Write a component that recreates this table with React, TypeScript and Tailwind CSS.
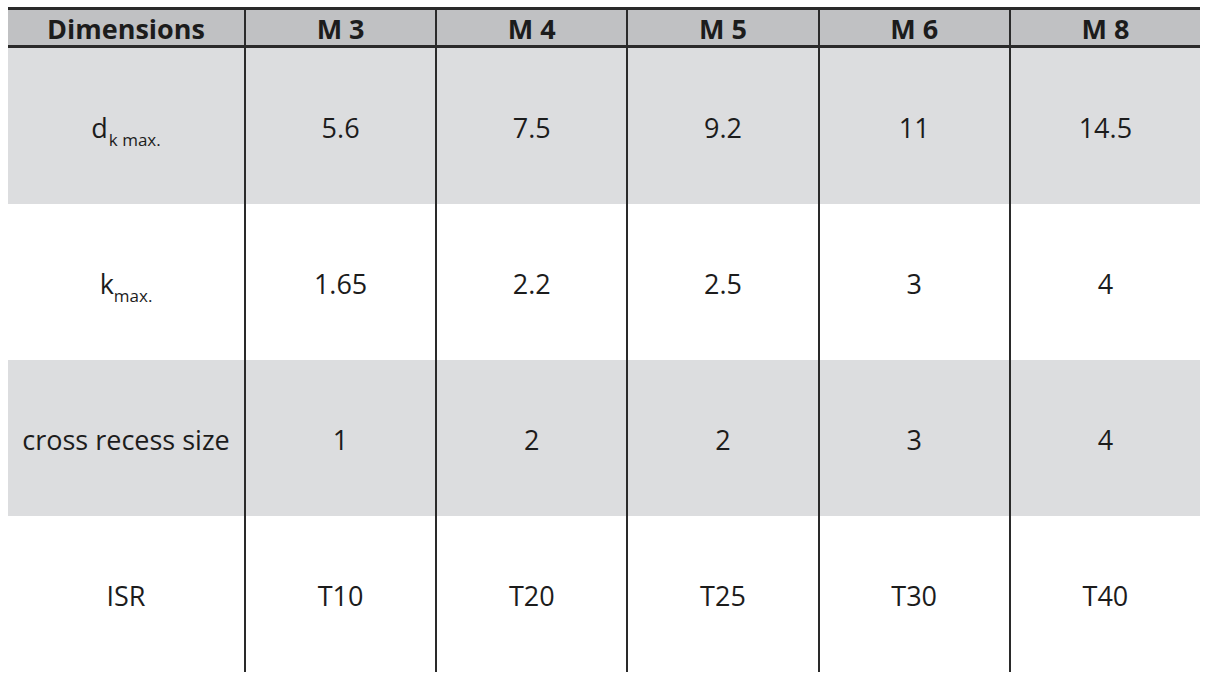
const cols = ["M 3", "M 4", "M 5", "M 6", "M 8"];

const rows = [
    { label: <>d<sub className="text-[17px] align-[-4px] ml-[1px]">k max.</sub></>, values: ["5.6", "7.5", "9.2", "11", "14.5"], shaded: true },
    { label: <>k<sub className="text-[17px] align-[-4px]">max.</sub></>, values: ["1.65", "2.2", "2.5", "3", "4"], shaded: false },
    { label: <>cross recess size</>, values: ["1", "2", "2", "3", "4"], shaded: true },
    { label: <>ISR</>, values: ["T10", "T20", "T25", "T30", "T40"], shaded: false },
];

const App = () => {
    return (
        <div className="w-[1208px] h-[683px] bg-white pl-[8px] pt-[7px] overflow-hidden" style={{ fontFamily: '"Open Sans", sans-serif' }}>
            <div className="w-[1192px] text-[#1c1c1c]">
                <div className="grid grid-cols-[236px_repeat(5,1fr)] h-[41px] border-y-[3px] border-[#2a2a2a] bg-[#c0c1c3] text-[27px] font-bold leading-none">
                    <div className="flex items-center justify-center pt-[1px]">Dimensions</div>
                    {cols.map((c) => (
                        <div key={c} className="flex items-center justify-center pt-[1px] border-l-2 border-[#2a2a2a]">
                            {c}
                        </div>
                    ))}
                </div>
                {rows.map((r, i) => (
                    <div
                        key={i}
                        className={`grid grid-cols-[236px_repeat(5,1fr)] h-[156px] text-[27px] leading-none ${r.shaded ? "bg-[#dcdddf]" : "bg-white"}`}
                    >
                        <div className="flex items-center justify-center pt-[3px]">
                            <span>{r.label}</span>
                        </div>
                        {r.values.map((v, j) => (
                            <div key={j} className="flex items-center justify-center pt-[3px] border-l-2 border-[#2a2a2a]">
                                {v}
                            </div>
                        ))}
                    </div>
                ))}
            </div>
        </div>
    );
};

export default App;
